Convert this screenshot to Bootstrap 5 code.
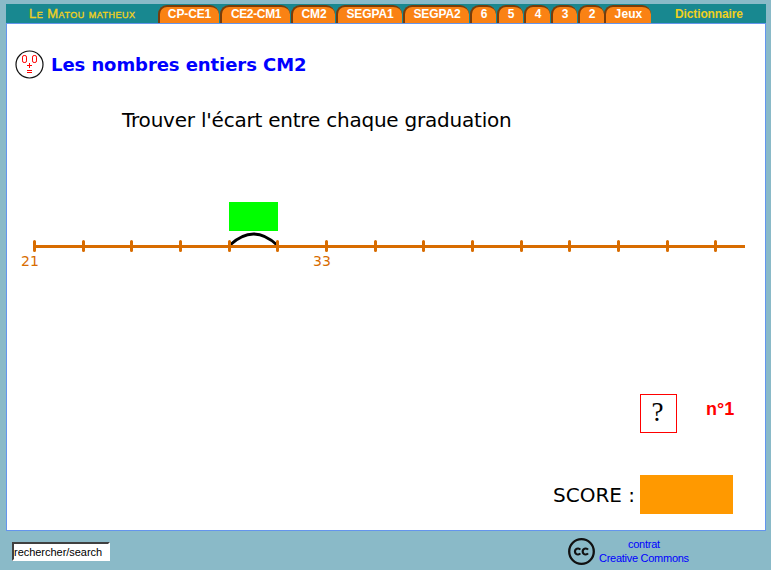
<!DOCTYPE html>
<html lang="fr">
<head>
<meta charset="utf-8">
<title>Le Matou matheux</title>
<link href="https://cdn.jsdelivr.net/npm/bootstrap@5.3.0/dist/css/bootstrap.min.css" rel="stylesheet">
<style>
body{background:#8abac8;font-family:"Liberation Sans",Arial,sans-serif;height:570px;overflow:hidden;padding:4px 5px 0 6px}
a{text-decoration:none}
.topbar{height:19px;background:#188890;font-size:12px;font-weight:700;line-height:18px}
.brand{width:152px;padding-left:23px;color:#f0d020;font-variant:small-caps;font-weight:400;font-size:13px;line-height:20px;white-space:nowrap;letter-spacing:.48px;-webkit-text-stroke:.35px #f0d020}
.tabs{gap:1px}
.tab{height:18px;margin-top:1px;background:#fa8214;border-left:2px solid #783c0a;border-top:2px solid #783c0a;border-radius:9px 9px 0 0;color:#fff;line-height:14px;white-space:nowrap;text-align:center;letter-spacing:-.12px}
.w-s{width:26px}.w-j{width:47px}.w-3{width:44px}.w-1{width:61px}.w-2{width:70px}.w-g{width:66px}
.w-j{margin-left:-1px;letter-spacing:.1px}
.w-2{letter-spacing:-.35px}
.dico{color:#f0d020;margin-left:24px;line-height:20px;letter-spacing:-.12px}
.sheet{height:508px;background:#fff;border:1px solid #6495ed;font-family:"DejaVu Sans",Verdana,sans-serif;color:#000}
.head-row{padding:26px 0 0 8px;gap:7px;height:54px}
.title{font-size:18px;font-weight:700;color:#00f;line-height:28px;margin:1px 0 0;letter-spacing:-.07px}
.question{font-size:20px;line-height:30px;margin:27px 0 0 115px;white-space:nowrap;letter-spacing:-.22px}
.line-art{display:block;margin-top:60px}
.help-row{margin-top:124px;padding-left:633px;gap:29px}
.help{width:37px;height:39px;border:1px solid #f00;font:27px/35px "Liberation Serif",serif;text-align:center;color:#000;padding-right:2px}
.num{font:bold 18px/30px "Liberation Sans",sans-serif;color:#f00}
.score-row{margin-top:42px;padding-left:546px}
.score-label{font-size:20px;width:87px;white-space:nowrap;padding-top:1px}
.score{width:93px;height:39px;background:#f90}
.foot{height:39px}
.search{width:98px;height:19px;margin:11px 0 0 6px;border:2px solid;border-color:#404040 #fff #fff #404040;background:#fff;font:11px/15px "Liberation Sans",sans-serif;padding:0;color:#000;border-radius:0;outline:0;letter-spacing:-.03px}
.cc{margin:7px 0 0 458px}
.license{font-size:11px;line-height:14px;color:#00f;text-align:center;margin:6px 0 0 4px;white-space:nowrap;letter-spacing:-.27px}
</style>
<script src="https://cdn.jsdelivr.net/npm/bootstrap@5.3.0/dist/js/bootstrap.bundle.min.js"></script>
</head>
<body>
<header class="topbar d-flex">
<a class="brand flex-shrink-0">Le Matou matheux</a>
<nav class="tabs d-flex">
<a class="tab w-1">CP-CE1</a><a class="tab w-2">CE2-CM1</a><a class="tab w-3">CM2</a><a class="tab w-g">SEGPA1</a><a class="tab w-g">SEGPA2</a><a class="tab w-s">6</a><a class="tab w-s">5</a><a class="tab w-s">4</a><a class="tab w-s">3</a><a class="tab w-s">2</a><a class="tab w-j">Jeux</a>
</nav>
<a class="dico">Dictionnaire</a>
</header>
<main class="sheet">
<div class="head-row d-flex">
<svg width="29" height="29" viewBox="0 0 29 29"><circle cx="14.500" cy="14.500" r="13.500" fill="#fff" stroke="#111" stroke-width="1.2"/><g fill="none" stroke="#f00" stroke-width="1"><rect x="7.500" y="5.500" width="4" height="7" rx="1.600"/><rect x="17.500" y="5.500" width="4" height="7" rx="1.600"/><path d="M12 15.500h5M14.500 13v5M12 20.500h5M12 22.500h5"/></g></svg>
<h1 class="title">Les nombres entiers CM2</h1>
</div>
<p class="question">Trouver l'écart entre chaque graduation</p>
<svg class="line-art" width="758" height="75" viewBox="7 195 758 75">
<rect x="229" y="202" width="49" height="29" fill="#0f0"/>
<path d="M230 245Q253.500 223 277 245" fill="none" stroke="#000" stroke-width="3"/>
<g stroke="#d86c00" stroke-width="3"><path d="M34 246.500H745"/><path stroke-linecap="round" d="M34.500 241.500v9M83.500 241.500v9M131.500 241.500v9M180.500 241.500v9M229.500 241.500v9M277.500 241.500v9M326.500 241.500v9M375.500 241.500v9M423.500 241.500v9M472.500 241.500v9M521.500 241.500v9M569.500 241.500v9M618.500 241.500v9M667.500 241.500v9M715.500 241.500v9"/></g>
<g fill="#d86c00" font-size="14" text-anchor="middle"><text x="30" y="266">21</text><text x="322" y="266">33</text></g>
</svg>
<div class="help-row d-flex"><a class="help">?</a><span class="num">n°1</span></div>
<div class="score-row d-flex align-items-center"><span class="score-label">SCORE :</span><div class="score"></div></div>
</main>
<footer class="foot d-flex align-items-start">
<input class="search" value="rechercher/search" aria-label="rechercher">
<svg class="cc" width="27" height="27" viewBox="0 0 27 27"><circle cx="13.500" cy="13.500" r="12.300" fill="none" stroke="#111" stroke-width="2.300"/><path d="M12.300 11.600A3 3 0 1 0 12.300 15.400M20 11.600A3 3 0 1 0 20 15.400" fill="none" stroke="#111" stroke-width="2.200"/></svg>
<a class="license">contrat<br>Creative Commons</a>
</footer>
</body>
</html>
